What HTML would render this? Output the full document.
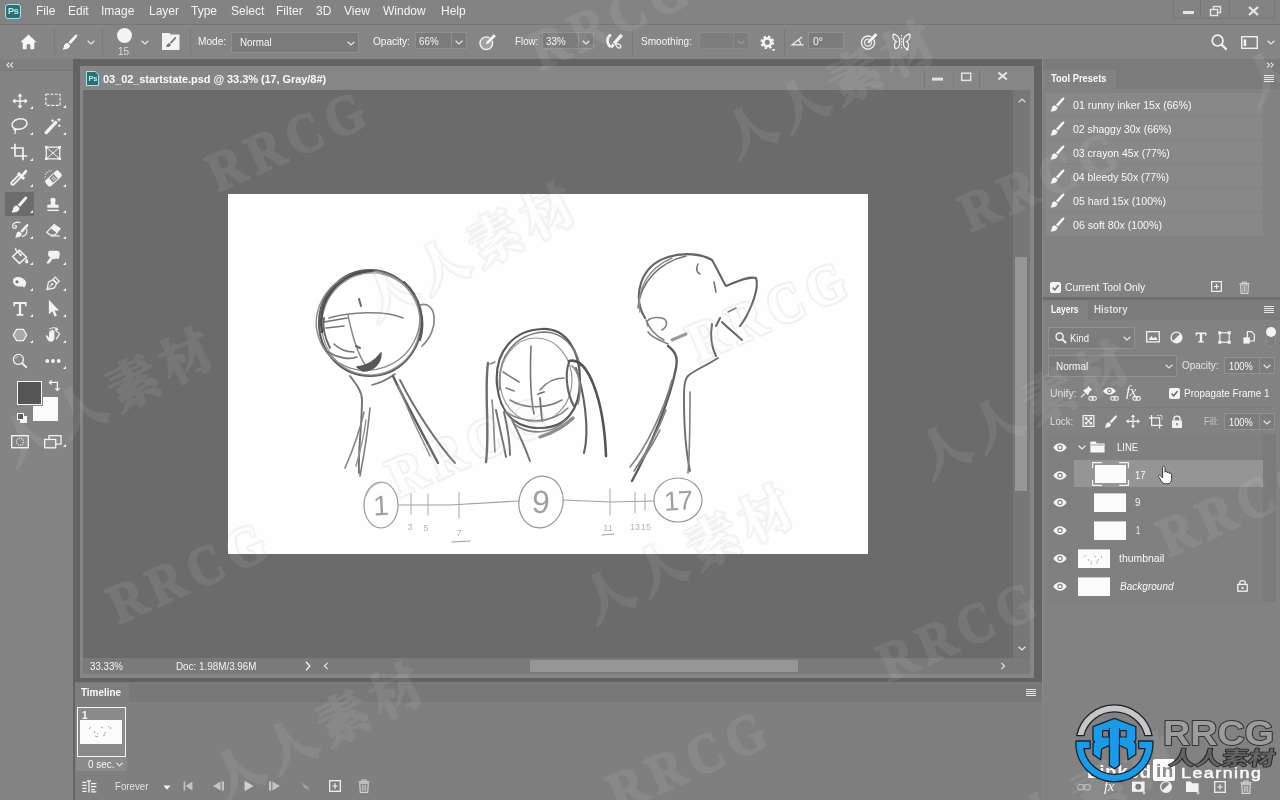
<!DOCTYPE html>
<html lang="en">
<head>
<meta charset="utf-8">
<title>Photoshop</title>
<style>
*{box-sizing:border-box;margin:0;padding:0}
html,body{width:1280px;height:800px;overflow:hidden;background:#6a6a6a}
body{position:relative;font-family:"Liberation Sans","Noto Sans CJK SC",sans-serif;font-size:11px;color:#f2f2f2;line-height:1}
.abs,.t,.b{position:absolute}
.t{white-space:nowrap;font-size:11.5px;line-height:14px;color:#f0f0f0}
.bold{font-weight:bold}
svg{position:absolute;overflow:visible}
/* ---------- frame ---------- */
#menubar{left:0;top:0;width:1280px;height:24px;background:#838383}
#menuline{left:0;top:24px;width:1280px;height:1px;background:#777}
#optbar{left:0;top:25px;width:1280px;height:34px;background:#858585}
#gap{left:0;top:59px;width:1280px;height:741px;background:#636363}
#toolbar{left:0;top:59px;width:73px;height:741px;background:#848484}
#toolhead{left:0;top:59px;width:73px;height:11px;background:#7f7f7f}
#docwin{left:80px;top:66px;width:954px;height:612px;background:#868686}
#doccanvas{left:83px;top:90px;width:930px;height:568px;background:#6b6b6b}
#vscroll{left:1013px;top:90px;width:17px;height:568px;background:#777}
#vthumb{left:1015px;top:257px;width:12px;height:234px;background:#969696}
#status{left:83px;top:658px;width:947px;height:16px;background:#7a7a7a}
#hthumb{left:530px;top:660px;width:268px;height:12px;background:#969696}
#paper{left:228px;top:194px;width:640px;height:360px;background:#fefefe}
#timeline{left:75px;top:682px;width:967px;height:118px;background:#7f7f7f}
#tlhead{left:75px;top:682px;width:967px;height:20px;background:#787878}
#tltab{left:75px;top:683px;width:54px;height:19px;background:#7f7f7f}
#rpanel{left:1042px;top:59px;width:238px;height:741px;background:#828282;border-left:1px solid #8a8a8a}

/* ---------- menu ---------- */
.m{position:absolute;top:4px;font-size:12px;line-height:15px;color:#f3f3f3;white-space:nowrap}
#pslogo{left:5px;top:4px;width:16px;height:15px;border:1px solid #a6e4e6;border-radius:3px;background:#2f6f73}
#pslogo span{position:absolute;left:2px;top:1px;font-size:9px;line-height:11px;font-weight:bold;color:#b7eef0;letter-spacing:-0.3px}
.wc{position:absolute;top:0;height:19px;border:1px solid #797979;border-top:0}
/* ---------- options bar ---------- */
.o{position:absolute;top:34px;font-size:11px;line-height:14px;color:#f6f6f6;white-space:nowrap}
.vsep{position:absolute;top:29px;width:1px;height:26px;background:#7a7a7a}
.box{position:absolute;top:32px;height:21px;border:1px solid #8f8f8f;background:#7b7b7b}
.chev{position:absolute;width:8px;height:5px}

/* ---------- document window ---------- */
.dt{position:absolute;top:72px;left:103px;font-size:11px;line-height:14px;font-weight:bold;color:#fafafa;white-space:nowrap;letter-spacing:-0.07px}
.st{position:absolute;top:659px;font-size:11px;line-height:14px;color:#f4f4f4;white-space:nowrap}

/* ---------- timeline ---------- */
.tab{position:absolute;font-size:10.5px;line-height:13px;font-weight:bold;color:#fafafa;white-space:nowrap}
/* ---------- right panels ---------- */
.r{position:absolute;font-size:11px;line-height:14px;color:#f8f8f8;white-space:nowrap}
.prow{position:absolute;left:1046px;width:217px;height:23px;background:#888888}
.rbox{position:absolute;border:1px solid #909090;background:#7c7c7c}
.thumb{position:absolute;background:#fbfbfb;border-top:1px solid #c8c8c8}
#wrap{position:absolute;left:0;top:0;width:1280px;height:800px;overflow:hidden;will-change:transform;transform:translateZ(0)}
</style>
</head>
<body>
<div id="wrap">
<div class="abs" id="menubar"></div>
<div class="abs" id="menuline"></div>
<div class="abs" id="optbar"></div>
<div class="abs" id="gap"></div>
<div class="abs" id="toolbar"></div>
<div class="abs" id="toolhead"></div>
<div class="abs" id="docwin"></div>
<div class="abs" id="doccanvas"></div>
<div class="abs" id="vscroll"></div>
<div class="abs" id="vthumb"></div>
<div class="abs" id="status"></div>
<div class="abs" id="hthumb"></div>
<div class="abs" id="paper"></div>
<div class="abs" id="timeline"></div>
<div class="abs" id="tlhead"></div>
<div class="abs" id="tltab"></div>
<div class="abs" id="rpanel"></div>

<!-- menu bar -->
<div class="abs" id="pslogo"><span>Ps</span></div>
<div class="m" style="left:36px">File</div>
<div class="m" style="left:68px">Edit</div>
<div class="m" style="left:101px">Image</div>
<div class="m" style="left:149px">Layer</div>
<div class="m" style="left:191px">Type</div>
<div class="m" style="left:231px">Select</div>
<div class="m" style="left:276px">Filter</div>
<div class="m" style="left:316px">3D</div>
<div class="m" style="left:344px">View</div>
<div class="m" style="left:383px">Window</div>
<div class="m" style="left:441px">Help</div>
<div class="wc" style="left:1173px;width:28px"></div>
<div class="wc" style="left:1200px;width:30px"></div>
<div class="wc" style="left:1229px;width:46px"></div>
<svg style="left:1182px;top:5px" width="90" height="14" viewBox="0 0 90 14">
 <rect x="1" y="6" width="11" height="3" fill="#e4e4e4"/>
 <rect x="31.5" y="1.5" width="7" height="6" fill="none" stroke="#e4e4e4" stroke-width="1.4"/>
 <rect x="28.5" y="4.5" width="7" height="6" fill="#838383" stroke="#e4e4e4" stroke-width="1.4"/>
 <path d="M67 2 L76 10 M76 2 L67 10" stroke="#e8e8e8" stroke-width="2.2" fill="none"/>
</svg>

<!-- options bar -->
<svg style="left:20px;top:34px;color:#f6f6f6" width="17" height="16" viewBox="0 0 17 16">
 <path d="M8.5 0.4 L16.6 8.2 H14.3 V15.2 H10.3 V10.2 H6.7 V15.2 H2.7 V8.2 H0.4Z" fill="#f6f6f6"/>
</svg>
<div class="vsep" style="left:54px"></div>
<svg style="left:62px;top:34px;color:#f2f2f2" width="16" height="16" viewBox="0 0 16 16"><path d="M14.6 0.6 C15.5 1 15.6 1.9 15 2.7 L8.6 10.2 L6.3 8.3 L13 1 C13.5 0.5 14 0.3 14.6 0.6Z" fill="currentColor"/>
   <path d="M5.6 9 L7.9 11 C8.3 13 6.5 15 3.6 15.2 C2.3 15.3 1 15.6 0.4 15.3 C1.6 14.3 1.6 13 2.1 11.4 C2.7 9.6 4.3 8.6 5.6 9Z" fill="currentColor"/></svg>
<svg style="left:87px;top:40px;color:#e6e6e6" width="8" height="5" viewBox="0 0 8 5"><path d="M0.6 0.7 L4 4 L7.4 0.7" fill="none" stroke="currentColor" stroke-width="1.2"/></svg>
<div class="vsep" style="left:102px"></div>
<div class="abs" style="left:117px;top:28px;width:15px;height:15px;border-radius:50%;background:#f4f4f4"></div>
<div class="o" style="left:118px;top:46px;font-size:10px;line-height:12px;color:#d8d8d8">15</div>
<svg style="left:141px;top:40px;color:#e6e6e6" width="8" height="5" viewBox="0 0 8 5"><path d="M0.6 0.7 L4 4 L7.4 0.7" fill="none" stroke="currentColor" stroke-width="1.2"/></svg>
<svg style="left:162px;top:33px" width="18" height="17" viewBox="0 0 18 17">
 <path d="M0 0 H7.5 L8.5 1.6 H17.5 V17 H0Z" fill="#f3f3f3"/>
 <path d="M13.6 4 C14.3 4.4 14.3 5 13.9 5.5 L9.3 10.8 L7.9 9.6 L12.6 4.4 C12.9 4 13.2 3.8 13.6 4Z M7.3 10.2 L8.8 11.5 C8.9 13 7.6 14 5.6 14.1 C4.9 14.1 4.2 14.3 3.8 14.1 C4.7 13.4 4.6 12.7 5 11.7 C5.4 10.6 6.4 9.9 7.3 10.2Z" fill="#727272"/>
</svg>
<div class="vsep" style="left:190px"></div>
<div class="o" style="left:197.5px;transform:scaleX(0.919);transform-origin:0 50%;/*t*/">Mode:</div>
<div class="box" style="left:231px;width:128px"></div>
<div class="o" style="left:239.6px;top:35px;transform:scaleX(0.894);transform-origin:0 50%;/*t*/">Normal</div>
<svg style="left:347px;top:41px;color:#e6e6e6" width="8" height="5" viewBox="0 0 8 5"><path d="M0.6 0.7 L4 4 L7.4 0.7" fill="none" stroke="currentColor" stroke-width="1.2"/></svg>
<div class="o" style="left:372.5px;transform:scaleX(0.914);transform-origin:0 50%;/*t*/">Opacity:</div>
<div class="box" style="left:415px;width:52px;height:17px"></div>
<div class="abs" style="left:451px;top:33px;width:1px;height:15px;background:#8f8f8f"></div>
<div class="o" style="left:419.4px;transform:scaleX(0.890);transform-origin:0 50%;/*t*/">66%</div>
<svg style="left:455px;top:40px;color:#e6e6e6" width="8" height="5" viewBox="0 0 8 5"><path d="M0.6 0.7 L4 4 L7.4 0.7" fill="none" stroke="currentColor" stroke-width="1.2"/></svg>
<svg style="left:479px;top:33px" width="18" height="18" viewBox="0 0 18 18">
 <circle cx="7.3" cy="10.2" r="6.3" fill="#a2a2a2" stroke="#efefef" stroke-width="1.4"/>
 <path d="M14.8 0.8 L17.2 3.2 L9.6 11 L6 12.2 L7.2 8.6Z" fill="#f6f6f6" stroke="#858585" stroke-width="0.7"/>
</svg>
<div class="o" style="left:514.7px;transform:scaleX(0.887);transform-origin:0 50%;/*t*/">Flow:</div>
<div class="box" style="left:542px;width:52px;height:17px"></div>
<div class="abs" style="left:578px;top:33px;width:1px;height:15px;background:#8f8f8f"></div>
<div class="o" style="left:546.4px;transform:scaleX(0.890);transform-origin:0 50%;/*t*/">33%</div>
<svg style="left:582px;top:40px;color:#e6e6e6" width="8" height="5" viewBox="0 0 8 5"><path d="M0.6 0.7 L4 4 L7.4 0.7" fill="none" stroke="currentColor" stroke-width="1.2"/></svg>
<svg style="left:605px;top:33px" width="19" height="18" viewBox="0 0 19 18">
 <path d="M6 1.6 C1.6 4 1.2 10 5.4 14" fill="none" stroke="#f0f0f0" stroke-width="2.6"/>
 <path d="M15.6 0.8 L18 3 L10.4 11.6 L7.8 9.4Z M7.2 10.2 L9.6 12.4 L7.4 15 L5.4 14.4Z" fill="#f0f0f0"/>
 <path d="M10.5 11.5 C11.5 10.2 14.5 10.6 15.6 12.4 C16.4 13.8 15.4 15.4 13.6 15 C12 14.7 11.4 13.4 10.5 11.5Z" fill="none" stroke="#f0f0f0" stroke-width="1.3"/>
</svg>
<div class="vsep" style="left:632px"></div>
<div class="o" style="left:641px;transform:scaleX(0.916);transform-origin:0 50%;/*t*/">Smoothing:</div>
<div class="box" style="left:699px;width:50px;height:17px;border-color:#8a8a8a;background:#7d7d7d"></div>
<div class="abs" style="left:733px;top:33px;width:1px;height:15px;background:#8a8a8a"></div>
<svg style="left:737px;top:40px;color:#9c9c9c" width="8" height="5" viewBox="0 0 8 5"><path d="M0.6 0.7 L4 4 L7.4 0.7" fill="none" stroke="currentColor" stroke-width="1.2"/></svg>
<svg style="left:759.5px;top:34.5px" width="16.4" height="20" viewBox="0 0 18 22">
 <circle cx="8" cy="8" r="4.3" fill="none" stroke="#f4f4f4" stroke-width="3"/>
 <circle cx="8" cy="8" r="6.2" fill="none" stroke="#f4f4f4" stroke-width="2.6" stroke-dasharray="2.6 2.27"/>
 <path d="M12.4 15.6 H17.2 L14.8 18Z" fill="#f4f4f4"/>
</svg>
<div class="vsep" style="left:784px"></div>
<svg style="left:791px;top:35.5px" width="13" height="10" viewBox="0 0 13 10">
 <path d="M11 1 L1.2 8.8 H12.6" fill="none" stroke="#efefef" stroke-width="1.3"/>
 <path d="M7.4 4 C9 5.4 9.6 7 9.6 8.6" fill="none" stroke="#efefef" stroke-width="1.1"/>
</svg>
<div class="box" style="left:808px;width:36px;top:32px;height:17px"></div>
<div class="o" style="left:813px;font-size:10.5px">0°</div>
<svg style="left:860px;top:32px" width="19" height="19" viewBox="0 0 19 19">
 <circle cx="8" cy="10.6" r="6.6" fill="none" stroke="#efefef" stroke-width="1.4"/>
 <circle cx="8" cy="10.6" r="3.5" fill="none" stroke="#efefef" stroke-width="1.3"/>
 <path d="M15.4 0.8 L17.8 3.2 L10.4 10.8 L6.8 12 L8 8.4Z" fill="#f6f6f6" stroke="#858585" stroke-width="0.7"/>
</svg>
<svg style="left:892px;top:33px" width="19" height="18" viewBox="0 0 19 18">
 <path d="M7.6 6.2 C5.6 2 2.4 0.8 1 1.4 C0.6 4.6 2.2 7.4 4.4 8.6 C2.4 9.4 1.6 12.6 3.6 15.6 C6 15.8 7.4 13 7.6 10.6Z" fill="none" stroke="#efefef" stroke-width="1.3"/>
 <path d="M11.4 6.2 C13.4 2 16.6 0.8 18 1.4 C18.4 4.6 16.8 7.4 14.6 8.6 C16.6 9.4 17.4 12.6 15.4 15.6 C13 15.8 11.6 13 11.4 10.6Z" fill="none" stroke="#efefef" stroke-width="1.3"/>
 <path d="M9.5 2 V17" stroke="#efefef" stroke-width="1" stroke-dasharray="1.5 1.5"/>
 <path d="M13.4 16 H17.4 L15.4 18Z" fill="#efefef"/>
</svg>
<svg style="left:1211px;top:34px" width="17" height="17" viewBox="0 0 17 17">
 <circle cx="6.6" cy="6.6" r="5.4" fill="none" stroke="#f2f2f2" stroke-width="1.7"/>
 <path d="M10.6 10.6 L15.6 15.6" stroke="#f2f2f2" stroke-width="2.2"/>
</svg>
<svg style="left:1241px;top:36px" width="17" height="13" viewBox="0 0 17 13">
 <rect x="0.7" y="0.7" width="15.6" height="11.6" fill="none" stroke="#f0f0f0" stroke-width="1.4"/>
 <rect x="2.6" y="3.4" width="2.6" height="6.6" fill="#f0f0f0"/>
</svg>
<svg style="left:1266.5px;top:39.5px;color:#e6e6e6" width="8" height="5" viewBox="0 0 8 5"><path d="M0.6 0.7 L4 4 L7.4 0.7" fill="none" stroke="currentColor" stroke-width="1.2"/></svg>

<!-- toolbar -->
<svg style="left:6px;top:61.5px" width="8" height="6" viewBox="0 0 10 7"><path d="M4 0.6 L1.2 3.5 L4 6.4 M8.4 0.6 L5.6 3.5 L8.4 6.4" fill="none" stroke="#f0f0f0" stroke-width="1.3"/></svg>
<div class="abs" style="left:0;top:70px;width:73px;height:1px;background:#7a7a7a"></div>
<div class="abs" style="left:5px;top:192px;width:29px;height:24px;background:#6c6c6c;border-radius:1px"></div>
<svg style="left:11.5px;top:92.5px" width="16" height="16" viewBox="0 0 18 18" fill="none" stroke="#f2f2f2" stroke-width="1.3"><path d="M9 1.6 V16.4 M1.6 9 H16.4" stroke-width="1.5"/><path d="M9 0.4 L11.8 3.8 H6.2Z M9 17.6 L11.8 14.2 H6.2Z M0.4 9 L3.8 6.2 V11.8Z M17.6 9 L14.2 6.2 V11.8Z" fill="#f2f2f2" stroke="none"/></svg>
<svg style="left:29.5px;top:106px" width="3" height="3" viewBox="0 0 4 4"><path d="M4 0 V4 H0Z" fill="#f2f2f2"/></svg>
<svg style="left:45px;top:91.5px" width="16" height="16" viewBox="0 0 18 18" fill="none" stroke="#f2f2f2" stroke-width="1.3"><rect x="1" y="2.5" width="16" height="12.5" stroke-dasharray="3.4 1.6" stroke-width="1.3"/></svg>
<svg style="left:63px;top:105px" width="3" height="3" viewBox="0 0 4 4"><path d="M4 0 V4 H0Z" fill="#f2f2f2"/></svg>
<svg style="left:10px;top:117px" width="18" height="18" viewBox="0 0 18 18" fill="none" stroke="#f2f2f2" stroke-width="1.3"><ellipse cx="9.5" cy="7" rx="7.6" ry="5.2" transform="rotate(-12 9.5 7)" stroke-width="1.5"/><path d="M4.2 11.2 C3.2 12.4 4.4 13.8 5.6 13 C6.4 12.4 5.8 11.2 4.8 11.4 M5.4 13.2 C5.8 14.6 5.4 16 4.6 17" stroke-width="1.3"/></svg>
<svg style="left:29.5px;top:132px" width="3" height="3" viewBox="0 0 4 4"><path d="M4 0 V4 H0Z" fill="#f2f2f2"/></svg>
<svg style="left:43.5px;top:117px" width="18" height="18" viewBox="0 0 18 18" fill="none" stroke="#f2f2f2" stroke-width="1.3"><path d="M2.2 15.6 L11.6 5.6" stroke-width="3.4" stroke-linecap="round"/><path d="M8.6 2.2 V5 M7.2 3.6 H10 M15 1 V4.6 M13.2 2.8 H16.8 M15.4 7.4 V10 M14.1 8.7 H16.7" stroke-width="1.1"/></svg>
<svg style="left:63px;top:132px" width="3" height="3" viewBox="0 0 4 4"><path d="M4 0 V4 H0Z" fill="#f2f2f2"/></svg>
<svg style="left:10px;top:143px" width="18" height="18" viewBox="0 0 18 18" fill="none" stroke="#f2f2f2" stroke-width="1.3"><path d="M5 0.8 V13 H17.2 M0.8 5 H13 V17.2" stroke-width="1.7"/></svg>
<svg style="left:29.5px;top:158px" width="3" height="3" viewBox="0 0 4 4"><path d="M4 0 V4 H0Z" fill="#f2f2f2"/></svg>
<svg style="left:45px;top:144.5px" width="16" height="16" viewBox="0 0 18 18" fill="none" stroke="#f2f2f2" stroke-width="1.3"><rect x="1.4" y="2.4" width="15.2" height="13.2" stroke-width="1.4"/><path d="M1.4 2.4 L16.6 15.6 M16.6 2.4 L1.4 15.6" stroke-width="1.1"/><path d="M0 1 H2.8 V3.8 H0Z M15.2 1 H18 V3.8 H15.2Z M0 14.2 H2.8 V17 H0Z M15.2 14.2 H18 V17 H15.2Z" fill="#f2f2f2" stroke="none"/></svg>
<svg style="left:10px;top:169px" width="18" height="18" viewBox="0 0 18 18" fill="none" stroke="#f2f2f2" stroke-width="1.3"><path d="M11.4 7.6 L4 15.2 C3 16.2 1.2 15.8 1.2 14.2 C1.2 13.6 1.6 13.2 2.2 12.6 L9.6 5.2" stroke-width="1.8"/><path d="M9 2.8 L15.2 9 L13 11 L7 5Z M11.6 5.6 L14.8 1.2 C16 0 18.2 1.8 17 3.4 L13.2 7.2Z" fill="#f2f2f2" stroke="none"/></svg>
<svg style="left:29.5px;top:184px" width="3" height="3" viewBox="0 0 4 4"><path d="M4 0 V4 H0Z" fill="#f2f2f2"/></svg>
<svg style="left:43.5px;top:169px" width="18" height="18" viewBox="0 0 18 18" fill="none" stroke="#f2f2f2" stroke-width="1.3"><g transform="rotate(-42 9.5 9.5)"><rect x="0.6" y="5.4" width="17.8" height="8" rx="2.2" fill="#f2f2f2" stroke="none"/><rect x="6.4" y="6.4" width="6.2" height="6" fill="#858585" stroke="none"/><path d="M8 8 h1.2 v1.2 h-1.2z M10 8 h1.2 v1.2 h-1.2z M8 10 h1.2 v1.2 h-1.2z M10 10 h1.2 v1.2 h-1.2z" fill="#f2f2f2" stroke="none"/></g><path d="M1.4 8.4 C0.8 4.6 3.6 1.4 7.6 1.8" stroke-width="1.1" stroke-dasharray="1.2 1.2"/></svg>
<svg style="left:63px;top:184px" width="3" height="3" viewBox="0 0 4 4"><path d="M4 0 V4 H0Z" fill="#f2f2f2"/></svg>
<svg style="left:11px;top:196px;color:#f4f4f4" width="17" height="17" viewBox="0 0 16 16"><path d="M14.6 0.6 C15.5 1 15.6 1.9 15 2.7 L8.6 10.2 L6.3 8.3 L13 1 C13.5 0.5 14 0.3 14.6 0.6Z" fill="currentColor"/>
   <path d="M5.6 9 L7.9 11 C8.3 13 6.5 15 3.6 15.2 C2.3 15.3 1 15.6 0.4 15.3 C1.6 14.3 1.6 13 2.1 11.4 C2.7 9.6 4.3 8.6 5.6 9Z" fill="currentColor"/></svg>
<svg style="left:29.5px;top:210px" width="3" height="3" viewBox="0 0 4 4"><path d="M4 0 V4 H0Z" fill="#f2f2f2"/></svg>
<svg style="left:45px;top:196.5px" width="16" height="16" viewBox="0 0 18 18" fill="none" stroke="#f2f2f2" stroke-width="1.3"><path d="M9 0.8 C11.4 0.8 12.6 2.8 11.8 4.8 C11.2 6.2 11.2 7.4 12 8.6 H15.4 V12.2 H2.6 V8.6 H6 C6.8 7.4 6.8 6.2 6.2 4.8 C5.4 2.8 6.6 0.8 9 0.8Z" fill="#f2f2f2" stroke="none"/><path d="M2.6 15 H15.4" stroke-width="1.7"/></svg>
<svg style="left:63px;top:210px" width="3" height="3" viewBox="0 0 4 4"><path d="M4 0 V4 H0Z" fill="#f2f2f2"/></svg>
<svg style="left:10.5px;top:221px" width="18" height="18" viewBox="0 0 18 18" fill="none" stroke="#f2f2f2" stroke-width="1.3"><g transform="translate(3.6 2.6) scale(0.9)" fill="#f2f2f2" stroke="none"><path d="M14.6 0.6 C15.5 1 15.6 1.9 15 2.7 L8.6 10.2 L6.3 8.3 L13 1 C13.5 0.5 14 0.3 14.6 0.6Z"/><path d="M5.6 9 L7.9 11 C8.3 13 6.5 15 3.6 15.2 C2.3 15.3 1 15.6 0.4 15.3 C1.6 14.3 1.6 13 2.1 11.4 C2.7 9.6 4.3 8.6 5.6 9Z"/></g><path d="M9.4 1.6 C5.6 0 1.4 2.2 1.6 5.4 C1.8 8 5.6 7.8 5.4 5.4 C5.2 4 3.8 4.2 3.8 5.2 M15.6 7.6 C17 11.4 15 14.6 11 15.6" stroke-width="1.2"/></svg>
<svg style="left:29.5px;top:236px" width="3" height="3" viewBox="0 0 4 4"><path d="M4 0 V4 H0Z" fill="#f2f2f2"/></svg>
<svg style="left:45px;top:222.5px" width="16" height="16" viewBox="0 0 18 18" fill="none" stroke="#f2f2f2" stroke-width="1.3"><path d="M10.2 1.6 L17 6.4 L11.2 13.6 H6.2 L2 10.6Z" stroke-width="1.3"/><path d="M10.2 1.6 L17 6.4 L13.4 11 L6.6 6.2Z" fill="#f2f2f2" stroke="none"/><path d="M6 14.6 H16.6" stroke-width="1.3"/></svg>
<svg style="left:63px;top:236px" width="3" height="3" viewBox="0 0 4 4"><path d="M4 0 V4 H0Z" fill="#f2f2f2"/></svg>
<svg style="left:10.5px;top:247px" width="18" height="18" viewBox="0 0 18 18" fill="none" stroke="#f2f2f2" stroke-width="1.3"><path d="M8.4 3.2 L15.4 10.2 L8.4 16.4 L1.6 9.6Z" stroke-width="1.5"/><path d="M5 1 C4 2 5 3.4 6.2 4.4 L9.6 7.8" stroke-width="1.4"/><circle cx="9.6" cy="8" r="1.2" fill="#f2f2f2" stroke="none"/><path d="M15.6 11.2 C16.8 13 17.8 14.6 17 15.8 C16.2 16.8 14.6 16.6 14.2 15.4 C13.8 14.2 14.8 12.8 15.6 11.2Z" fill="#f2f2f2" stroke="none"/></svg>
<svg style="left:29.5px;top:262px" width="3" height="3" viewBox="0 0 4 4"><path d="M4 0 V4 H0Z" fill="#f2f2f2"/></svg>
<svg style="left:45px;top:248.5px" width="16" height="16" viewBox="0 0 18 18" fill="none" stroke="#f2f2f2" stroke-width="1.3"><path d="M5.2 2 H13.6 C16 2 16.8 3.6 16.6 5.8 L16 9.6 C15.6 11.6 13 11.6 12.6 10 C11.4 11.8 9.4 11.8 9 10.6 L5 15.8 C4 17 2 16.6 1.8 15.6 L6 9.2 C4 8.6 3.2 6.8 3.6 4.8 C3.8 3.2 4.2 2.4 5.2 2Z" fill="#f2f2f2" stroke="none"/></svg>
<svg style="left:63px;top:262px" width="3" height="3" viewBox="0 0 4 4"><path d="M4 0 V4 H0Z" fill="#f2f2f2"/></svg>
<svg style="left:11.5px;top:274.5px" width="16" height="16" viewBox="0 0 18 18" fill="none" stroke="#f2f2f2" stroke-width="1.3"><path d="M2 4 C4.4 1.6 9 1.8 12.4 4 C15.6 6 16.8 9.4 15.4 11.4 L13.8 14.2 L11.4 12.6 C8.6 13.6 4.6 12.8 2.6 10.6 C0.8 8.6 0.6 5.6 2 4Z" fill="#f2f2f2" stroke="none"/><circle cx="5.6" cy="7.6" r="1.7" fill="#6e6e6e" stroke="none"/></svg>
<svg style="left:29.5px;top:288px" width="3" height="3" viewBox="0 0 4 4"><path d="M4 0 V4 H0Z" fill="#f2f2f2"/></svg>
<svg style="left:45px;top:274.5px" width="16" height="16" viewBox="0 0 18 18" fill="none" stroke="#f2f2f2" stroke-width="1.3"><path d="M11.4 2.4 L16 7 L13.6 9.4 L9 4.8Z" stroke-width="1.3"/><path d="M8.8 5.4 L13 9.6 L10.6 14.6 L2.4 16.4 L3.8 8Z" stroke-width="1.4"/><path d="M2.6 16.2 L7.6 10.6" stroke-width="1.1"/><circle cx="8" cy="10.4" r="1.3" fill="#f2f2f2" stroke="none"/></svg>
<svg style="left:63px;top:288px" width="3" height="3" viewBox="0 0 4 4"><path d="M4 0 V4 H0Z" fill="#f2f2f2"/></svg>
<svg style="left:11.5px;top:300.5px" width="16" height="16" viewBox="0 0 18 18" fill="none" stroke="#f2f2f2" stroke-width="1.3"><path d="M1.6 1.2 H16.4 V5.8 H14.6 V3.4 H10.3 V14.6 H12.8 V16.6 H5.2 V14.6 H7.7 V3.4 H3.4 V5.8 H1.6Z" fill="#f2f2f2" stroke="none"/></svg>
<svg style="left:29.5px;top:314px" width="3" height="3" viewBox="0 0 4 4"><path d="M4 0 V4 H0Z" fill="#f2f2f2"/></svg>
<svg style="left:45px;top:300.5px" width="16" height="16" viewBox="0 0 18 18" fill="none" stroke="#f2f2f2" stroke-width="1.3"><path d="M4.4 -1.4 V14.8 L8.2 11.4 L10.8 17.6 L13.4 16.4 L10.8 10.6 H15.8Z" fill="#f2f2f2" stroke="none"/></svg>
<svg style="left:63px;top:314px" width="3" height="3" viewBox="0 0 4 4"><path d="M4 0 V4 H0Z" fill="#f2f2f2"/></svg>
<svg style="left:11.5px;top:326.5px" width="16" height="16" viewBox="0 0 18 18" fill="none" stroke="#f2f2f2" stroke-width="1.3"><path d="M5.2 2.6 H12.8 L16.6 9 L12.8 15.4 H5.2 L1.4 9Z" fill="#a8a8a8" stroke-width="1.4"/></svg>
<svg style="left:29.5px;top:340px" width="3" height="3" viewBox="0 0 4 4"><path d="M4 0 V4 H0Z" fill="#f2f2f2"/></svg>
<svg style="left:45px;top:326.5px" width="16" height="16" viewBox="0 0 18 18" fill="none" stroke="#f2f2f2" stroke-width="1.3"><path d="M4.6 9.6 V5.6 C4.6 4.6 6 4.6 6 5.6 V4.2 C6 3.2 7.6 3.2 7.6 4.2 V3.8 C7.6 2.8 9.2 2.8 9.2 3.8 V4.6 C9.2 3.8 10.6 3.8 10.6 4.8 V11.6 C10.6 14.4 9.4 16.6 6.8 16.6 C4.6 16.6 3.4 15.2 2.4 13.2 L1 10.4 C0.6 9.4 1.8 8.8 2.6 9.8 L4.6 12Z" fill="#f2f2f2" stroke="none"/><path d="M11 2.6 L16.4 7.6 L12.6 13.6" stroke-width="1.3"/><path d="M5 2.4 C7.4 0.2 11.6 0.4 13.6 2.2" stroke-width="1.2"/><path d="M12.4 0.4 L15.6 3 L11.8 3.8Z" fill="#f2f2f2" stroke="none"/></svg>
<svg style="left:63px;top:340px" width="3" height="3" viewBox="0 0 4 4"><path d="M4 0 V4 H0Z" fill="#f2f2f2"/></svg>
<svg style="left:11.5px;top:352.5px" width="16" height="16" viewBox="0 0 18 18" fill="none" stroke="#f2f2f2" stroke-width="1.3"><circle cx="7.2" cy="7.2" r="5.6" stroke-width="1.5"/><path d="M11.4 11.4 L16.6 16.6" stroke-width="2.2"/><path d="M4.2 6.4 C4.6 5 5.8 4.2 7 4.2" stroke-width="0.9"/></svg>
<svg style="left:45px;top:352.5px" width="16" height="16" viewBox="0 0 18 18" fill="none" stroke="#f2f2f2" stroke-width="1.3"><circle cx="2.6" cy="9" r="2.2" fill="#f2f2f2" stroke="none"/><circle cx="9" cy="9" r="2.2" fill="#f2f2f2" stroke="none"/><circle cx="15.4" cy="9" r="2.2" fill="#f2f2f2" stroke="none"/></svg>
<svg style="left:63px;top:366px" width="3" height="3" viewBox="0 0 4 4"><path d="M4 0 V4 H0Z" fill="#f2f2f2"/></svg>
<div class="abs" style="left:33px;top:397px;width:25px;height:24px;background:#fbfbfb"></div>
<div class="abs" style="left:17px;top:381px;width:25px;height:24px;background:#555;border:1px solid #f4f4f4;box-shadow:0 0 0 1px #848484"></div>
<svg style="left:48px;top:379px" width="13" height="13" viewBox="0 0 13 13"><path d="M3 3.4 H9.4 V9.6" fill="none" stroke="#f2f2f2" stroke-width="1.3"/><path d="M0.4 3.4 L3.6 0.6 V6.2Z M9.4 12.6 L6.6 9.2 H12.2Z" fill="#f2f2f2"/></svg>
<div class="abs" style="left:20px;top:416px;width:7px;height:7px;background:#f6f6f6"></div>
<div class="abs" style="left:17px;top:413px;width:7px;height:7px;background:#555;border:1px solid #f4f4f4"></div>
<svg style="left:11px;top:435px" width="18" height="14" viewBox="0 0 18 14"><rect x="0.7" y="0.7" width="16.6" height="12" fill="none" stroke="#f2f2f2" stroke-width="1.4"/><circle cx="9" cy="6.7" r="3.6" fill="none" stroke="#f2f2f2" stroke-width="1.1" stroke-dasharray="1.1 1.1"/></svg>
<svg style="left:44px;top:435px" width="18" height="14" viewBox="0 0 18 14"><rect x="5" y="0.7" width="12" height="8.4" fill="none" stroke="#f2f2f2" stroke-width="1.3"/><rect x="0.7" y="4.4" width="11" height="8.4" fill="#848484" stroke="#f2f2f2" stroke-width="1.3"/></svg>
<svg style="left:63px;top:444px" width="3" height="3" viewBox="0 0 4 4"><path d="M4 0 V4 H0Z" fill="#f2f2f2"/></svg>

<!-- document window -->
<svg style="left:86px;top:71px" width="13" height="15" viewBox="0 0 13 15"><path d="M0.5 0.5 H9.2 L12.5 3.8 V14.5 H0.5Z" fill="#2f6f73" stroke="#a6e4e6" stroke-width="1"/></svg>
<div class="abs" style="left:88.5px;top:74px;font-size:7.5px;line-height:9px;font-weight:bold;color:#b7eef0;letter-spacing:-0.3px">Ps</div>
<div class="dt">03_02_startstate.psd @ 33.3% (17, Gray/8#)</div>
<div class="abs" style="left:924px;top:69px;width:1px;height:19px;background:#7c7c7c"></div>
<div class="abs" style="left:953px;top:69px;width:1px;height:19px;background:#7c7c7c"></div>
<div class="abs" style="left:979px;top:69px;width:1px;height:19px;background:#7c7c7c"></div>
<svg style="left:931px;top:70px" width="80" height="16" viewBox="0 0 80 16">
 <rect x="1" y="7.6" width="11" height="3" fill="#e2e2e2"/>
 <rect x="30.7" y="3.2" width="9" height="7.2" fill="none" stroke="#e2e2e2" stroke-width="1.5"/>
 <path d="M67.4 2.6 L75.8 9.6 M75.8 2.6 L67.4 9.6" stroke="#e6e6e6" stroke-width="2" fill="none"/>
</svg>
<svg style="left:1018px;top:98px;color:#dcdcdc" width="8" height="5" viewBox="0 0 8 5"><g transform="rotate(180 4.0 2.5)"><path d="M0.6 0.7 L4 4 L7.4 0.7" fill="none" stroke="currentColor" stroke-width="1.2"/></g></svg>
<svg style="left:1018px;top:646px;color:#e8e8e8" width="8" height="5" viewBox="0 0 8 5"><path d="M0.6 0.7 L4 4 L7.4 0.7" fill="none" stroke="currentColor" stroke-width="1.2"/></svg>
<div class="st" style="left:90px;transform:scaleX(0.884);transform-origin:0 50%;/*t*/">33.33%</div>
<div class="st" style="left:175.5px;transform:scaleX(0.896);transform-origin:0 50%;/*t*/">Doc: 1.98M/3.96M</div>
<svg style="left:305px;top:661px;color:#efefef" width="6" height="10" viewBox="0 0 6 10"><path d="M1 0.8 L4.8 5 L1 9.2" fill="none" stroke="currentColor" stroke-width="1.4"/></svg>
<svg style="left:323px;top:662px;color:#e4e4e4" width="6" height="8" viewBox="0 0 6 8"><path d="M4.6 0.8 L1.4 4 L4.6 7.2" fill="none" stroke="currentColor" stroke-width="1.2"/></svg>
<svg style="left:1000px;top:662px;color:#e4e4e4" width="6" height="8" viewBox="0 0 6 8"><path d="M1.4 0.8 L4.6 4 L1.4 7.2" fill="none" stroke="currentColor" stroke-width="1.2"/></svg>

<!-- timeline -->
<div class="tab" style="left:81px;top:686px;transform:scaleX(0.943);transform-origin:0 50%;/*t*/">Timeline</div>
<svg style="left:1026px;top:689px;color:#e6e6e6" width="10" height="8" viewBox="0 0 10 8"><path d="M0 0 H10 V1 H0Z M0 2 H10 V3 H0Z M0 4 H10 V5 H0Z M0 6 H10 V7 H0Z" fill="currentColor" shape-rendering="crispEdges"/></svg>
<div class="abs" style="left:77px;top:707px;width:49px;height:50px;border:1px solid #f6f6f6;background:#8a8a8a"></div>
<div class="abs" style="left:80px;top:720px;width:42px;height:24px;background:#fcfcfc"></div>
<svg style="left:80px;top:720px" width="42" height="24" viewBox="0 0 42 24"><path d="M9 9 l2 -2 m3 4 l1 2 m6 -6 l2 1 m-8 8 l3 1 m6 -3 l2 -2 m4 -5 l1 2 m-14 4 l1 1 m5 2 l2 -1 m3 -9 l1 1" stroke="#8c8c8c" stroke-width="0.8" fill="none"/></svg>
<div class="tab" style="left:82px;top:709px;font-size:10px">1</div>
<div class="abs" style="left:76px;top:757px;width:51px;height:14px;background:#8a8a8a"></div>
<div class="r" style="left:88px;top:757px;font-size:11px;transform:scaleX(0.903);transform-origin:0 50%;/*t*/">0 sec.</div>
<svg style="left:116px;top:762px;color:#f0f0f0" width="7" height="5" viewBox="0 0 8 5"><path d="M0.6 0.7 L4 4 L7.4 0.7" fill="none" stroke="currentColor" stroke-width="1.2"/></svg>
<svg style="left:82px;top:780px" width="15" height="13" viewBox="0 0 15 13"><path d="M0.4 2.4 H4.6 M0.4 5.4 H4.6 M0.4 8.4 H4.6 M0.4 11.4 H4.6 M9 3.6 H14.4 M9 6.6 H14.4 M9 9.6 H13 M9 11.8 H14.4" stroke="#f2f2f2" stroke-width="1.3" fill="none"/><path d="M7 1 V12.6 M5 0.8 H9" stroke="#f2f2f2" stroke-width="1.3" fill="none"/></svg>
<div class="r" style="left:114.5px;top:779px;color:#e0e0e0;transform:scaleX(0.884);transform-origin:0 50%;/*t*/">Forever</div>
<svg style="left:163px;top:785px" width="8" height="5" viewBox="0 0 8 5"><path d="M0.4 0.4 H7.6 L4 4.8Z" fill="#f4f4f4"/></svg>
<svg style="left:183px;top:780px" width="130" height="12" viewBox="0 0 130 12" fill="#c4c4c4">
 <path d="M0.6 1.4 H2.2 V10.6 H0.6Z M9.4 1.4 V10.6 L2.6 6Z"/>
 <path d="M37.6 1.4 V10.6 L30 6Z M38.8 1.4 H41 V10.6 H38.8Z"/>
 <path d="M61.6 0.8 L70.4 6 L61.6 11.2Z" fill="#d0d0d0"/>
 <path d="M86 1.4 H88.2 V10.6 H86Z M89.4 1.4 L97 6 L89.4 10.6Z"/>
 <path d="M118.4 2.4 L126 7.6 L124.6 9.6 L122 8.6Z M126 6.6 A1.8 1.8 0 1 0 126.1 10.2Z" fill="#a4a4a4"/>
</svg>
<svg style="left:329px;top:780px;color:#f2f2f2" width="12" height="12" viewBox="0 0 12 12"><rect x="0.7" y="0.7" width="10.6" height="10.6" fill="none" stroke="currentColor" stroke-width="1.3"/>
   <path d="M6 3.3 V8.7 M3.3 6 H8.7" stroke="currentColor" stroke-width="1.2" fill="none"/></svg>
<svg style="left:358px;top:779px;color:#d0d0d0" width="12" height="14" viewBox="0 0 12 14"><path d="M0.5 2.8 H11.5 M4 2.6 V1 H8 V2.6" fill="none" stroke="currentColor" stroke-width="1.2"/>
   <path d="M1.7 4.2 H10.3 L9.7 13.4 H2.3Z" fill="none" stroke="currentColor" stroke-width="1.2"/>
   <path d="M4.3 5.6 V11.8 M6 5.6 V11.8 M7.7 5.6 V11.8" fill="none" stroke="currentColor" stroke-width="0.9"/></svg>

<!-- tool presets panel -->
<div class="abs" style="left:1043px;top:59px;width:237px;height:9px;background:#7b7b7b"></div>
<div class="abs" style="left:1043px;top:68px;width:237px;height:21px;background:#7b7b7b"></div>
<div class="abs" style="left:1043px;top:70px;width:73px;height:19px;background:#828282"></div>
<svg style="left:1265.5px;top:61.5px" width="8" height="6" viewBox="0 0 10 7"><path d="M1.6 0.6 L4.4 3.5 L1.6 6.4 M6 0.6 L8.8 3.5 L6 6.4" fill="none" stroke="#f0f0f0" stroke-width="1.3"/></svg>
<div class="tab" style="left:1051px;top:72px;transform:scaleX(0.892);transform-origin:0 50%;/*t*/">Tool Presets</div>
<svg style="left:1264px;top:75px;color:#e6e6e6" width="10" height="8" viewBox="0 0 10 8"><path d="M0 0 H10 V1 H0Z M0 2 H10 V3 H0Z M0 4 H10 V5 H0Z M0 6 H10 V7 H0Z" fill="currentColor" shape-rendering="crispEdges"/></svg>
<div class="prow" style="top:93px"></div>
<svg style="left:1050px;top:97px;color:#f4f4f4" width="15" height="15" viewBox="0 0 16 16"><path d="M14.6 0.6 C15.5 1 15.6 1.9 15 2.7 L8.6 10.2 L6.3 8.3 L13 1 C13.5 0.5 14 0.3 14.6 0.6Z" fill="currentColor"/>
   <path d="M5.6 9 L7.9 11 C8.3 13 6.5 15 3.6 15.2 C2.3 15.3 1 15.6 0.4 15.3 C1.6 14.3 1.6 13 2.1 11.4 C2.7 9.6 4.3 8.6 5.6 9Z" fill="currentColor"/></svg>
<div class="r" style="left:1073px;top:98px;transform:scaleX(0.964);transform-origin:0 50%;/*t*/">01 runny inker 15x (66%)</div>
<div class="prow" style="top:117px"></div>
<svg style="left:1050px;top:121px;color:#f4f4f4" width="15" height="15" viewBox="0 0 16 16"><path d="M14.6 0.6 C15.5 1 15.6 1.9 15 2.7 L8.6 10.2 L6.3 8.3 L13 1 C13.5 0.5 14 0.3 14.6 0.6Z" fill="currentColor"/>
   <path d="M5.6 9 L7.9 11 C8.3 13 6.5 15 3.6 15.2 C2.3 15.3 1 15.6 0.4 15.3 C1.6 14.3 1.6 13 2.1 11.4 C2.7 9.6 4.3 8.6 5.6 9Z" fill="currentColor"/></svg>
<div class="r" style="left:1073px;top:122px;transform:scaleX(0.948);transform-origin:0 50%;/*t*/">02 shaggy 30x (66%)</div>
<div class="prow" style="top:141px"></div>
<svg style="left:1050px;top:145px;color:#f4f4f4" width="15" height="15" viewBox="0 0 16 16"><path d="M14.6 0.6 C15.5 1 15.6 1.9 15 2.7 L8.6 10.2 L6.3 8.3 L13 1 C13.5 0.5 14 0.3 14.6 0.6Z" fill="currentColor"/>
   <path d="M5.6 9 L7.9 11 C8.3 13 6.5 15 3.6 15.2 C2.3 15.3 1 15.6 0.4 15.3 C1.6 14.3 1.6 13 2.1 11.4 C2.7 9.6 4.3 8.6 5.6 9Z" fill="currentColor"/></svg>
<div class="r" style="left:1073px;top:146px;transform:scaleX(0.953);transform-origin:0 50%;/*t*/">03 crayon 45x (77%)</div>
<div class="prow" style="top:165px"></div>
<svg style="left:1050px;top:169px;color:#f4f4f4" width="15" height="15" viewBox="0 0 16 16"><path d="M14.6 0.6 C15.5 1 15.6 1.9 15 2.7 L8.6 10.2 L6.3 8.3 L13 1 C13.5 0.5 14 0.3 14.6 0.6Z" fill="currentColor"/>
   <path d="M5.6 9 L7.9 11 C8.3 13 6.5 15 3.6 15.2 C2.3 15.3 1 15.6 0.4 15.3 C1.6 14.3 1.6 13 2.1 11.4 C2.7 9.6 4.3 8.6 5.6 9Z" fill="currentColor"/></svg>
<div class="r" style="left:1073px;top:170px;transform:scaleX(0.951);transform-origin:0 50%;/*t*/">04 bleedy 50x (77%)</div>
<div class="prow" style="top:189px"></div>
<svg style="left:1050px;top:193px;color:#f4f4f4" width="15" height="15" viewBox="0 0 16 16"><path d="M14.6 0.6 C15.5 1 15.6 1.9 15 2.7 L8.6 10.2 L6.3 8.3 L13 1 C13.5 0.5 14 0.3 14.6 0.6Z" fill="currentColor"/>
   <path d="M5.6 9 L7.9 11 C8.3 13 6.5 15 3.6 15.2 C2.3 15.3 1 15.6 0.4 15.3 C1.6 14.3 1.6 13 2.1 11.4 C2.7 9.6 4.3 8.6 5.6 9Z" fill="currentColor"/></svg>
<div class="r" style="left:1073px;top:194px;transform:scaleX(0.962);transform-origin:0 50%;/*t*/">05 hard 15x (100%)</div>
<div class="prow" style="top:213px"></div>
<svg style="left:1050px;top:217px;color:#f4f4f4" width="15" height="15" viewBox="0 0 16 16"><path d="M14.6 0.6 C15.5 1 15.6 1.9 15 2.7 L8.6 10.2 L6.3 8.3 L13 1 C13.5 0.5 14 0.3 14.6 0.6Z" fill="currentColor"/>
   <path d="M5.6 9 L7.9 11 C8.3 13 6.5 15 3.6 15.2 C2.3 15.3 1 15.6 0.4 15.3 C1.6 14.3 1.6 13 2.1 11.4 C2.7 9.6 4.3 8.6 5.6 9Z" fill="currentColor"/></svg>
<div class="r" style="left:1073px;top:218px;transform:scaleX(0.963);transform-origin:0 50%;/*t*/">06 soft 80x (100%)</div>
<div class="abs" style="left:1050px;top:282px;width:11px;height:11px;border-radius:2px;background:#f4f4f4"></div>
<svg style="left:1051px;top:283px" width="9" height="9" viewBox="0 0 9 9"><path d="M1.6 4.6 L3.8 6.8 L7.6 2" fill="none" stroke="#707070" stroke-width="1.5"/></svg>
<div class="r" style="left:1065.3px;top:280px;transform:scaleX(0.940);transform-origin:0 50%;/*t*/">Current Tool Only</div>
<svg style="left:1211px;top:281px;color:#f2f2f2" width="11" height="11" viewBox="0 0 12 12"><rect x="0.7" y="0.7" width="10.6" height="10.6" fill="none" stroke="currentColor" stroke-width="1.3"/>
   <path d="M6 3.3 V8.7 M3.3 6 H8.7" stroke="currentColor" stroke-width="1.2" fill="none"/></svg>
<svg style="left:1239px;top:281px;color:#d4d4d4" width="11" height="13" viewBox="0 0 12 14"><path d="M0.5 2.8 H11.5 M4 2.6 V1 H8 V2.6" fill="none" stroke="currentColor" stroke-width="1.2"/>
   <path d="M1.7 4.2 H10.3 L9.7 13.4 H2.3Z" fill="none" stroke="currentColor" stroke-width="1.2"/>
   <path d="M4.3 5.6 V11.8 M6 5.6 V11.8 M7.7 5.6 V11.8" fill="none" stroke="currentColor" stroke-width="0.9"/></svg>
<div class="abs" style="left:1043px;top:297px;width:237px;height:3px;background:#6f6f6f"></div>

<!-- layers panel -->
<div class="abs" style="left:1043px;top:300px;width:237px;height:20px;background:#7b7b7b"></div>
<div class="abs" style="left:1043px;top:301px;width:45px;height:19px;background:#828282"></div>
<div class="tab" style="left:1051.4px;top:303px;transform:scaleX(0.815);transform-origin:0 50%;/*t*/">Layers</div>
<div class="tab" style="left:1094.4px;top:303px;color:#dedede;transform:scaleX(0.928);transform-origin:0 50%;/*t*/">History</div>
<svg style="left:1264px;top:306px;color:#e6e6e6" width="10" height="8" viewBox="0 0 10 8"><path d="M0 0 H10 V1 H0Z M0 2 H10 V3 H0Z M0 4 H10 V5 H0Z M0 6 H10 V7 H0Z" fill="currentColor" shape-rendering="crispEdges"/></svg>
<div class="rbox" style="left:1048px;top:327px;width:87px;height:22px"></div>
<svg style="left:1055px;top:332px" width="12" height="12" viewBox="0 0 12 12"><circle cx="4.6" cy="4.6" r="3.6" fill="none" stroke="#f2f2f2" stroke-width="1.4"/><path d="M7.4 7.4 L11 11" stroke="#f2f2f2" stroke-width="1.8"/></svg>
<div class="r" style="left:1070.4px;top:331px;transform:scaleX(0.862);transform-origin:0 50%;/*t*/">Kind</div>
<svg style="left:1123px;top:336px;color:#e6e6e6" width="8" height="5" viewBox="0 0 8 5"><path d="M0.6 0.7 L4 4 L7.4 0.7" fill="none" stroke="currentColor" stroke-width="1.2"/></svg>
<svg style="left:1146px;top:331px" width="14" height="12" viewBox="0 0 14 12"><rect x="0.7" y="0.7" width="12.6" height="10.2" fill="none" stroke="#f2f2f2" stroke-width="1.3"/><path d="M2.4 9 L5.4 5 L7.4 7.4 L9.4 5.6 L11.6 9Z" fill="#f2f2f2"/></svg>
<svg style="left:1170px;top:331px" width="13" height="13" viewBox="0 0 13 13"><circle cx="6.5" cy="6.5" r="5.4" fill="none" stroke="#f2f2f2" stroke-width="1.3"/><path d="M2.7 10.3 A5.4 5.4 0 0 0 10.3 2.7Z" fill="#f2f2f2"/></svg>
<svg style="left:1195px;top:332px" width="12" height="11" viewBox="0 0 12 11"><path d="M0.6 0.4 H11.4 V3.4 H10 V2 H7.2 V9.2 H8.8 V10.6 H3.2 V9.2 H4.8 V2 H2 V3.4 H0.6Z" fill="#f2f2f2"/></svg>
<svg style="left:1218px;top:331px" width="13" height="13" viewBox="0 0 13 13"><rect x="1.8" y="1.8" width="9.4" height="9.4" fill="none" stroke="#f2f2f2" stroke-width="1.2"/><path d="M0.3 0.3 h3 v3 h-3z M9.7 0.3 h3 v3 h-3z M0.3 9.7 h3 v3 h-3z M9.7 9.7 h3 v3 h-3z" fill="#f2f2f2"/></svg>
<svg style="left:1243px;top:331px" width="12" height="13" viewBox="0 0 12 13"><path d="M4.4 0.7 H8.6 L11.3 3.4 V10 H4.4Z" fill="none" stroke="#f2f2f2" stroke-width="1.2"/><rect x="0.4" y="6.4" width="6.4" height="6.2" fill="#f2f2f2"/></svg>
<div class="abs" style="left:1266px;top:328px;width:10px;height:19px;border-radius:5px;border:1px solid #909090;background:#7e7e7e"></div>
<div class="abs" style="left:1266px;top:327px;width:10px;height:10px;border-radius:50%;background:#f4f4f4"></div>
<div class="rbox" style="left:1048px;top:355px;width:129px;height:22px"></div>
<div class="r" style="left:1056.4px;top:359px;transform:scaleX(0.908);transform-origin:0 50%;/*t*/">Normal</div>
<svg style="left:1165px;top:364px;color:#e6e6e6" width="8" height="5" viewBox="0 0 8 5"><path d="M0.6 0.7 L4 4 L7.4 0.7" fill="none" stroke="currentColor" stroke-width="1.2"/></svg>
<div class="r" style="left:1182.4px;top:358px;color:#e4e4e4;transform:scaleX(0.907);transform-origin:0 50%;/*t*/">Opacity:</div>
<div class="rbox" style="left:1224px;top:357px;width:51px;height:17px"></div>
<div class="abs" style="left:1259px;top:358px;width:1px;height:15px;background:#909090"></div>
<div class="r" style="left:1229.4px;top:359px;font-size:10.5px;transform:scaleX(0.879);transform-origin:0 50%;/*t*/">100%</div>
<svg style="left:1263px;top:364px;color:#e6e6e6" width="8" height="5" viewBox="0 0 8 5"><path d="M0.6 0.7 L4 4 L7.4 0.7" fill="none" stroke="currentColor" stroke-width="1.2"/></svg>
<div class="r" style="left:1050.4px;top:386px;color:#dcdcdc;transform:scaleX(0.946);transform-origin:0 50%;/*t*/">Unify:</div>
<svg style="left:1080px;top:385px" width="64" height="17" viewBox="0 0 64 17" fill="none" stroke="#f2f2f2">
 <path d="M8.4 1 L12.4 5 L10.6 5.6 L8.6 8.4 L8 10.4 L2.8 5.2 L5 4.6 L7.8 2.6Z" fill="#f2f2f2" stroke="none"/><path d="M5 8.4 L1 12.4" stroke-width="1.2"/>
 <g stroke-width="1.1"><rect x="8.8" y="11.6" width="4.4" height="3.6" rx="1.8"/><rect x="12" y="11.6" width="4.4" height="3.6" rx="1.8"/></g>
 <path d="M23 6 C25 3.4 27 2.4 29.4 2.4 C31.8 2.4 33.8 3.4 35.8 6 C33.8 8.6 31.8 9.6 29.4 9.6 C27 9.6 25 8.6 23 6Z" fill="#f2f2f2" stroke="none"/><circle cx="29.4" cy="6" r="2.2" fill="#848484" stroke="none"/><circle cx="29.4" cy="6" r="1.1" fill="#f2f2f2" stroke="none"/>
 <g stroke-width="1.1"><rect x="30.8" y="11.6" width="4.4" height="3.6" rx="1.8"/><rect x="34" y="11.6" width="4.4" height="3.6" rx="1.8"/></g>
 <g stroke-width="1.1"><rect x="52.8" y="11.6" width="4.4" height="3.6" rx="1.8"/><rect x="56" y="11.6" width="4.4" height="3.6" rx="1.8"/></g>
</svg>
<div class="r" style="left:1126px;top:383px;font-family:'Liberation Serif',serif;font-style:italic;font-size:15px;line-height:16px;color:#f4f4f4;letter-spacing:-0.5px">fx</div>
<div class="abs" style="left:1169px;top:388px;width:11px;height:11px;border-radius:2px;background:#f4f4f4"></div>
<svg style="left:1170px;top:389px" width="9" height="9" viewBox="0 0 9 9"><path d="M1.6 4.6 L3.8 6.8 L7.6 2" fill="none" stroke="#707070" stroke-width="1.5"/></svg>
<div class="r" style="left:1184.4px;top:386px;font-size:10.5px;transform:scaleX(0.946);transform-origin:0 50%;/*t*/">Propagate Frame 1</div>
<div class="abs" style="left:1046px;top:407px;width:230px;height:1px;background:#7c7c7c"></div>
<div class="r" style="left:1050.4px;top:414px;color:#dcdcdc;transform:scaleX(0.882);transform-origin:0 50%;/*t*/">Lock:</div>
<svg style="left:1082px;top:414px" width="104" height="15" viewBox="0 0 104 15" fill="none" stroke="#f2f2f2">
 <rect x="1.1" y="1.6" width="10.8" height="10.8" stroke-width="1.2"/><path d="M2.8 3.2 h2.6 v2.6 h-2.6z M7.6 3.2 h2.6 v2.6 h-2.6z M5.2 5.6 h2.6 v2.6 h-2.6z M2.8 8 h2.6 v2.6 h-2.6z M7.6 8 h2.6 v2.6 h-2.6z" fill="#f2f2f2" stroke="none"/>
 <g transform="translate(22.4 1) scale(0.82)" fill="#f2f2f2" stroke="none"><path d="M14.6 0.6 C15.5 1 15.6 1.9 15 2.7 L8.6 10.2 L6.3 8.3 L13 1 C13.5 0.5 14 0.3 14.6 0.6Z"/><path d="M5.6 9 L7.9 11 C8.3 13 6.5 15 3.6 15.2 C2.3 15.3 1 15.6 0.4 15.3 C1.6 14.3 1.6 13 2.1 11.4 C2.7 9.6 4.3 8.6 5.6 9Z"/></g>
 <path d="M51 1.6 V13 M45.2 7.3 H56.8" stroke-width="1.2"/><path d="M51 0.4 L53.2 3 H48.8Z M51 14.2 L53.2 11.6 H48.8Z M44 7.3 L46.6 5.1 V9.5Z M58 7.3 L55.4 5.1 V9.5Z" fill="#f2f2f2" stroke="none"/>
 <path d="M69.6 1 V11.4 H80.6 M67 3.8 H77.6 V14.4" stroke-width="1.2"/><path d="M75.2 1.4 L80 1.4 L80 6" stroke-width="1" stroke-dasharray="1.4 1"/>
 <rect x="90" y="6.4" width="10" height="7.6" fill="#f2f2f2" stroke="none"/><path d="M92 6.4 V4.4 C92 1.4 98 1.4 98 4.4 V6.4" stroke-width="1.4"/><rect x="94.2" y="9" width="1.6" height="2.4" fill="#848484" stroke="none"/>
</svg>
<div class="r" style="left:1204.4px;top:414px;color:#c4c4c4;transform:scaleX(0.853);transform-origin:0 50%;/*t*/">Fill:</div>
<div class="rbox" style="left:1224px;top:413px;width:51px;height:17px"></div>
<div class="abs" style="left:1259px;top:414px;width:1px;height:15px;background:#909090"></div>
<div class="r" style="left:1229.4px;top:415px;font-size:10.5px;transform:scaleX(0.879);transform-origin:0 50%;/*t*/">100%</div>
<svg style="left:1263px;top:420px;color:#e6e6e6" width="8" height="5" viewBox="0 0 8 5"><path d="M0.6 0.7 L4 4 L7.4 0.7" fill="none" stroke="currentColor" stroke-width="1.2"/></svg>
<!-- layer list -->
<div class="abs" style="left:1046px;top:434px;width:217px;height:168px;background:#808080"></div>
<div class="abs" style="left:1263px;top:434px;width:13px;height:168px;background:#7b7b7b"></div>
<div class="abs" style="left:1074px;top:460px;width:189px;height:27px;background:#959595"></div>
<svg style="left:1053px;top:442.5px;color:#f4f4f4" width="14" height="9" viewBox="0 0 14 9"><path d="M0.3 4.5 C2.3 1.4 4.6 0.3 7 0.3 C9.4 0.3 11.7 1.4 13.7 4.5 C11.7 7.6 9.4 8.7 7 8.7 C4.6 8.7 2.3 7.6 0.3 4.5Z" fill="currentColor"/>
   <circle cx="7" cy="4.4" r="2.7" fill="#848484"/>
   <circle cx="7" cy="4.4" r="1.5" fill="currentColor"/></svg>
<svg style="left:1053px;top:470.5px;color:#f4f4f4" width="14" height="9" viewBox="0 0 14 9"><path d="M0.3 4.5 C2.3 1.4 4.6 0.3 7 0.3 C9.4 0.3 11.7 1.4 13.7 4.5 C11.7 7.6 9.4 8.7 7 8.7 C4.6 8.7 2.3 7.6 0.3 4.5Z" fill="currentColor"/>
   <circle cx="7" cy="4.4" r="2.7" fill="#848484"/>
   <circle cx="7" cy="4.4" r="1.5" fill="currentColor"/></svg>
<svg style="left:1053px;top:497.5px;color:#f4f4f4" width="14" height="9" viewBox="0 0 14 9"><path d="M0.3 4.5 C2.3 1.4 4.6 0.3 7 0.3 C9.4 0.3 11.7 1.4 13.7 4.5 C11.7 7.6 9.4 8.7 7 8.7 C4.6 8.7 2.3 7.6 0.3 4.5Z" fill="currentColor"/>
   <circle cx="7" cy="4.4" r="2.7" fill="#848484"/>
   <circle cx="7" cy="4.4" r="1.5" fill="currentColor"/></svg>
<svg style="left:1053px;top:525.5px;color:#f4f4f4" width="14" height="9" viewBox="0 0 14 9"><path d="M0.3 4.5 C2.3 1.4 4.6 0.3 7 0.3 C9.4 0.3 11.7 1.4 13.7 4.5 C11.7 7.6 9.4 8.7 7 8.7 C4.6 8.7 2.3 7.6 0.3 4.5Z" fill="currentColor"/>
   <circle cx="7" cy="4.4" r="2.7" fill="#848484"/>
   <circle cx="7" cy="4.4" r="1.5" fill="currentColor"/></svg>
<svg style="left:1053px;top:553.5px;color:#f4f4f4" width="14" height="9" viewBox="0 0 14 9"><path d="M0.3 4.5 C2.3 1.4 4.6 0.3 7 0.3 C9.4 0.3 11.7 1.4 13.7 4.5 C11.7 7.6 9.4 8.7 7 8.7 C4.6 8.7 2.3 7.6 0.3 4.5Z" fill="currentColor"/>
   <circle cx="7" cy="4.4" r="2.7" fill="#848484"/>
   <circle cx="7" cy="4.4" r="1.5" fill="currentColor"/></svg>
<svg style="left:1053px;top:581.5px;color:#f4f4f4" width="14" height="9" viewBox="0 0 14 9"><path d="M0.3 4.5 C2.3 1.4 4.6 0.3 7 0.3 C9.4 0.3 11.7 1.4 13.7 4.5 C11.7 7.6 9.4 8.7 7 8.7 C4.6 8.7 2.3 7.6 0.3 4.5Z" fill="currentColor"/>
   <circle cx="7" cy="4.4" r="2.7" fill="#848484"/>
   <circle cx="7" cy="4.4" r="1.5" fill="currentColor"/></svg>
<svg style="left:1078px;top:445px;color:#ececec" width="8" height="5" viewBox="0 0 8 5"><path d="M0.6 0.7 L4 4 L7.4 0.7" fill="none" stroke="currentColor" stroke-width="1.2"/></svg>
<svg style="left:1090px;top:441px" width="15" height="12" viewBox="0 0 15 12"><path d="M0.4 0.6 H5.6 L6.8 2.4 H14.6 V11.4 H0.4Z" fill="#f6f6f6"/><path d="M1.2 4 H13.8" stroke="#8a8a8a" stroke-width="0.8"/></svg>
<div class="r" style="left:1116.6px;top:440px;font-size:10.5px;transform:scaleX(0.900);transform-origin:0 50%;/*t*/">LINE</div>
<div class="thumb" style="left:1095px;top:465px;width:31px;height:18px;border-top:0"></div>
<svg style="left:1092px;top:462px" width="37" height="24" viewBox="0 0 37 24" fill="none" stroke="#f6f6f6" stroke-width="1.1"><path d="M0.6 6 V0.6 H10 M27 0.6 H36.4 V6 M36.4 18 V23.4 H27 M10 23.4 H0.6 V18"/></svg>
<div class="r" style="left:1135.3px;top:468px;font-size:10.5px;transform:scaleX(0.907);transform-origin:0 50%;/*t*/">17</div>
<div class="thumb" style="left:1094px;top:493px;width:32px;height:19px"></div>
<div class="r" style="left:1135.3px;top:495px;font-size:10.5px;transform:scaleX(0.924);transform-origin:0 50%;/*t*/">9</div>
<div class="thumb" style="left:1094px;top:521px;width:32px;height:19px"></div>
<div class="r" style="left:1135.6px;top:523px;font-size:10.5px;transform:scaleX(0.684);transform-origin:0 50%;/*t*/">1</div>
<div class="thumb" style="left:1078px;top:549px;width:32px;height:19px"></div>
<svg style="left:1078px;top:549px" width="32" height="19" viewBox="0 0 32 19"><path d="M6 8 l2 -2 m2 4 l1 2 m5 -5 l2 1 m-6 6 l2 1 m5 -3 l2 -2 m2 -3 l1 2 m-11 3 l1 1 m4 1 l2 -1" stroke="#a0a0a0" stroke-width="0.8" fill="none"/></svg>
<div class="r" style="left:1119.3px;top:551px;font-size:10.5px;transform:scaleX(0.995);transform-origin:0 50%;/*t*/">thumbnail</div>
<div class="thumb" style="left:1078px;top:577px;width:32px;height:19px"></div>
<div class="r" style="left:1120px;top:579px;font-size:10.5px;font-style:italic;transform:scaleX(0.956);transform-origin:0 50%;/*t*/">Background</div>
<svg style="left:1237px;top:579px" width="11" height="13" viewBox="0 0 11 13"><rect x="0.8" y="5.4" width="9.4" height="6.8" fill="none" stroke="#f2f2f2" stroke-width="1.3"/><path d="M2.8 5.4 V3.6 C2.8 1 8.2 1 8.2 3.6 V5.4" fill="none" stroke="#f2f2f2" stroke-width="1.3"/><rect x="4.6" y="7.8" width="1.8" height="2.2" fill="#f2f2f2"/></svg>
<!-- hand cursor -->
<svg style="left:1157px;top:465px" width="18" height="20" viewBox="0 0 18 20"><path d="M5.6 10.6 V2.6 C5.6 0.8 8 0.8 8 2.6 V7.2 C8 6 10.2 6.2 10.2 7.4 V8 C10.4 6.8 12.4 7 12.4 8.2 V8.8 C12.6 7.8 14.6 8 14.6 9.2 V13.6 C14.6 16.6 13.4 18.8 10.4 18.8 H8.4 C6.4 18.8 5.2 17.6 4.2 15.8 L1.6 11.6 C1 10.4 2.4 9.4 3.4 10.6 L5.6 13Z" fill="#fdfdfd" stroke="#3c3c3c" stroke-width="1"/></svg>
<!-- layers footer icons -->
<svg style="left:1076px;top:780px" width="178" height="16" viewBox="0 0 178 16" fill="none" stroke="#f0f0f0">
 <g stroke="#b4b4b4" stroke-width="1.2"><rect x="1.6" y="4.6" width="7.4" height="5.2" rx="2.6"/><rect x="7" y="4.6" width="7.4" height="5.2" rx="2.6"/></g>
 <path d="M66 15.4 H70 L68 17.4Z M120 15.4 H124 L122 17.4Z" fill="#f0f0f0" stroke="none" transform="translate(0 -3)"/>
 <rect x="56" y="1.6" width="12.6" height="10.2" fill="#f2f2f2" stroke="none"/><circle cx="62.3" cy="6.7" r="3" fill="#7c7c7c" stroke="none"/>
 <circle cx="90" cy="7" r="5.4" stroke-width="1.3"/><path d="M86.2 10.8 A5.4 5.4 0 0 0 93.8 3.2Z" fill="#f2f2f2" stroke="none"/>
 <path d="M110 1.6 H115 L116 3.2 H122.6 V12 H110Z" fill="#f2f2f2" stroke="none"/>
 <rect x="138.7" y="1.7" width="10.6" height="10.6" stroke-width="1.3"/><path d="M144 4.2 V9.8 M141.2 7 H146.8" stroke-width="1.1"/>
</svg>
<div class="r" style="left:1104px;top:778px;font-family:'Liberation Serif',serif;font-style:italic;font-size:15px;line-height:16px;color:#f4f4f4;letter-spacing:-0.5px">fx</div>
<svg style="left:1240px;top:780px;color:#d8d8d8" width="12" height="14" viewBox="0 0 12 14"><path d="M0.5 2.8 H11.5 M4 2.6 V1 H8 V2.6" fill="none" stroke="currentColor" stroke-width="1.2"/>
   <path d="M1.7 4.2 H10.3 L9.7 13.4 H2.3Z" fill="none" stroke="currentColor" stroke-width="1.2"/>
   <path d="M4.3 5.6 V11.8 M6 5.6 V11.8 M7.7 5.6 V11.8" fill="none" stroke="currentColor" stroke-width="0.9"/></svg>

<!-- paper watermark -->
<div class="abs" style="left:228px;top:194px;width:640px;height:360px;overflow:hidden">
<svg style="left:0;top:0;pointer-events:none;filter:blur(0.7px)" width="640" height="360" viewBox="228 194 640 360">
 <g fill="#fefefe" stroke="#f1f1f1" stroke-width="4.4" stroke-linejoin="round" paint-order="stroke" text-anchor="middle">
  <g font-family="'Liberation Serif',serif" font-weight="bold" font-size="56" letter-spacing="8">
   <text x="289" y="140" transform="translate(289 140) rotate(-24) scale(0.88 1) translate(-289 -140)" dy="19">RRCG</text>
   <text x="770" y="310" transform="translate(770 310) rotate(-24) scale(0.88 1) translate(-770 -310)" dy="19">RRCG</text>
   <text x="470" y="445" transform="translate(470 445) rotate(-24) scale(0.88 1) translate(-470 -445)" dy="19">RRCG</text>
   <text x="190" y="572" transform="translate(190 572) rotate(-24) scale(0.88 1) translate(-190 -572)" dy="19">RRCG</text>
  </g>
  <g font-family="'Liberation Serif','Noto Serif CJK SC',serif" font-weight="bold" font-size="52" letter-spacing="7">
   <text x="472" y="250" transform="rotate(-27 472 250)" dy="19">人人素材</text>
   <text x="690" y="553" transform="rotate(-27 690 553)" dy="19">人人素材</text>
  </g>
 </g>
</svg>
</div>
<!-- sketch on canvas -->
<svg style="left:0;top:0;filter:blur(0.35px)" width="1280" height="800" viewBox="0 0 1280 800" fill="none" stroke-linecap="round" stroke-linejoin="round">
 <!-- head 1 -->
 <g stroke="#6e6e6e" stroke-width="1.8">
  <ellipse cx="370" cy="323" rx="51" ry="53" stroke="#5c5c5c" stroke-width="2.1"/>
  <ellipse cx="368" cy="321" rx="52" ry="49" transform="rotate(-20 368 321)" stroke="#8a8a8a" stroke-width="1.4"/>
  <ellipse cx="371" cy="324" rx="49" ry="51" transform="rotate(14 371 324)" stroke="#969696" stroke-width="1.2"/>
  <path d="M322 332 C317 300 338 273 372 271" stroke="#4e4e4e" stroke-width="2.5"/>
  <path d="M420 340 C426 320 420 296 404 282" stroke="#5a5a5a" stroke-width="2.2"/>
  <path d="M420 305 C437 300 440 330 422 346" stroke="#838383" stroke-width="1.6"/>
  <path d="M329 318 C350 312 385 310 403 318" stroke="#7e7e7e" stroke-width="1.4"/>
  <path d="M348 315 C352 335 358 355 366 366" stroke="#868686" stroke-width="1.4"/>
  <path d="M324 322 L347 318 M326 328 L344 326 M328 352 C338 358 350 360 357 357 M334 344 C340 350 348 352 354 352" stroke="#747474" stroke-width="1.6"/>
  <path d="M324 318 C322 328 326 340 330 348" stroke="#686868" stroke-width="1.9"/>
  <path d="M357 367 C368 366 376 360 381 353 C381 363 374 371 363 371Z" fill="#585858" stroke="#585858" stroke-width="1.6"/>
  <path d="M359 299 L361 306 M356 346 L360 348" stroke="#686868" stroke-width="2.0"/>
  <path d="M372 385 C380 383 388 379 395 374" stroke="#787878" stroke-width="1.6"/>
  <path d="M350 376 C357 385 362 392 362 400 C362 424 358 450 359 473" stroke="#727272" stroke-width="1.9"/>
  <path d="M364 412 C360 430 352 452 345 468" stroke="#868686" stroke-width="1.6"/>
  <path d="M370 408 C368 430 364 455 360 476" stroke="#7e7e7e" stroke-width="1.6"/>
  <path d="M366 420 C364 436 360 452 356 466" stroke="#929292" stroke-width="1.4"/>
  <path d="M393 376 C404 400 424 436 438 463" stroke="#5e5e5e" stroke-width="2.4"/>
  <path d="M400 380 C414 408 436 442 455 463" stroke="#707070" stroke-width="1.9"/>
  <path d="M398 386 C408 410 420 436 430 456" stroke="#888888" stroke-width="1.4"/>
 </g>
 <!-- head 2 -->
 <g stroke="#6e6e6e" stroke-width="1.8">
  <path d="M497 385 C494 350 515 330 542 329 C566 328 580 350 580 380 C580 410 566 428 540 428 C514 428 500 412 497 385Z" stroke="#585858" stroke-width="2.2"/>
  <path d="M500 390 C496 356 516 334 544 332 C562 332 576 346 580 366" stroke="#787878" stroke-width="1.6"/>
  <ellipse cx="536" cy="380" rx="36" ry="42" stroke="#969696" stroke-width="1.2"/>
  <path d="M531 346 C530 370 530 395 534 414" stroke="#767676" stroke-width="1.6"/>
  <path d="M503 372 L519 382 M506 388 L514 391 M540 390 C548 380 556 378 564 378" stroke="#7e7e7e" stroke-width="1.6"/>
  <path d="M510 400 C526 410 548 408 562 400 M506 412 C524 424 552 424 568 408 M514 424 C530 436 552 434 566 420" stroke="#808080" stroke-width="1.6"/>
  <path d="M538 394 L544 392 M540 398 L542 420" stroke="#6e6e6e" stroke-width="1.8"/>
  <path d="M540 437 C552 433 564 427 573 418" stroke="#8e8e8e" stroke-width="3.2"/>
  <path d="M488 363 C484 392 490 430 486 462" stroke="#6e6e6e" stroke-width="2.4"/>
  <path d="M490 364 L495 362 M492 400 C494 420 494 440 495 452" stroke="#878787" stroke-width="1.6"/>
  <path d="M496 410 C500 430 504 446 506 457 M504 412 C508 430 510 444 510 455 M512 420 C520 436 526 450 530 461" stroke="#717171" stroke-width="1.9"/>
  <path d="M569 361 C588 356 604 400 606 456" stroke="#545454" stroke-width="2.6"/>
  <path d="M569 362 C564 376 568 396 574 406 M576 368 C584 392 590 430 584 453" stroke="#626262" stroke-width="2.1"/>
  <path d="M572 366 C580 372 582 390 578 404" stroke="#878787" stroke-width="1.6"/>
 </g>
 <!-- head 3 -->
 <g stroke="#6e6e6e" stroke-width="1.8">
  <path d="M645 318 C632 296 640 266 668 257 C684 252 702 254 712 260 C718 270 722 280 726 286 C736 282 748 276 756 278 C760 290 748 316 740 326" stroke="#646464" stroke-width="2.1"/>
  <path d="M638 308 C640 282 660 262 686 256" stroke="#727272" stroke-width="1.6"/>
  <path d="M640 312 C636 290 648 268 672 258" stroke="#8e8e8e" stroke-width="1.4"/>
  <path d="M698 264 C696 268 696 272 700 274 M714 282 L716 292 M736 308 L728 312" stroke="#767676" stroke-width="1.6"/>
  <path d="M648 326 C644 320 652 316 662 318 C668 320 668 326 662 330 M648 332 C652 338 660 340 668 344 M646 320 C650 330 656 336 664 340" stroke="#808080" stroke-width="1.6"/>
  <path d="M672 340 L686 334" stroke="#9a9a9a" stroke-width="3.0"/>
  <path d="M712 324 C710 336 712 348 716 356 M722 322 C730 330 738 336 742 340 M716 326 L720 318" stroke="#646464" stroke-width="2.0"/>
  <path d="M718 358 C706 366 694 370 688 376 C684 380 684 390 684 400 C684 430 686 452 690 471" stroke="#6c6c6c" stroke-width="1.9"/>
  <path d="M690 392 C690 420 690 450 688 473" stroke="#808080" stroke-width="1.6"/>
  <path d="M668 346 C676 352 678 358 676 368 C670 400 650 448 632 481" stroke="#5e5e5e" stroke-width="2.4"/>
  <path d="M672 380 C664 410 646 448 630 467 M666 410 C656 436 644 456 634 471 M660 430 C652 446 644 458 638 466" stroke="#808080" stroke-width="1.6"/>
 </g>
 <!-- frame ruler -->
 <g stroke="#979797" stroke-width="1.2">
  <ellipse cx="381" cy="505" rx="17" ry="23"/>
  <path d="M366 496 C370 486 378 481 386 483" stroke="#b0b0b0" stroke-width="1"/>
  <ellipse cx="541" cy="502" rx="22" ry="26" transform="rotate(12 541 502)"/>
  <ellipse cx="678" cy="500" rx="24" ry="22"/>
  <path d="M398 505 L450 505 L519 501 M563 500 L610 502 L654 501" stroke="#a0a0a0" stroke-width="1.1"/>
  <path d="M411 494 V514 M428 494 V515 M459 492 V518 M610 489 V515 M635 492 V513 M645 494 V510" stroke="#a8a8a8" stroke-width="1"/>
  <path d="M452 542 L470 541 M602 535 L614 534" stroke="#a0a0a0"/>
 </g>
 <g font-family="'Liberation Sans',sans-serif" fill="#a0a0a0" stroke="none" text-anchor="middle">
  <text x="381" y="515" font-size="28" transform="rotate(-3 381 505)">1</text>
  <text x="541" y="513" font-size="32" transform="rotate(4 541 502)">9</text>
  <text x="678" y="510" font-size="27" transform="rotate(-3 678 500)" letter-spacing="-1">17</text>
  <g font-size="9" fill="#b4b4b4">
   <text x="410" y="530">3</text><text x="426" y="531">5</text><text x="459" y="536">7</text>
   <text x="608" y="531">11</text><text x="635" y="530">13</text><text x="646" y="530">15</text>
  </g>
 </g>
</svg>
<!-- faint tiled watermark -->
<svg style="left:0;top:0;pointer-events:none" width="1280" height="800" viewBox="0 0 1280 800">
 <g fill="#fff" stroke="#fff" stroke-width="2" stroke-linejoin="round" text-anchor="middle">
  <g font-family="'Liberation Serif',serif" font-weight="bold" font-size="56" letter-spacing="8">
   <text x="289" y="140" transform="translate(289 140) rotate(-24) scale(0.88 1) translate(-289 -140)" dy="19" opacity="0.075">RRCG</text>
   <text x="612" y="18" transform="translate(612 18) rotate(-24) scale(0.88 1) translate(-612 -18)" dy="19" opacity="0.075">RRCG</text>
   <text x="770" y="310" transform="translate(770 310) rotate(-24) scale(0.88 1) translate(-770 -310)" dy="19" opacity="0.075">RRCG</text>
   <text x="1042" y="180" transform="translate(1042 180) rotate(-24) scale(0.88 1) translate(-1042 -180)" dy="19" opacity="0.075">RRCG</text>
   <text x="470" y="445" transform="translate(470 445) rotate(-24) scale(0.88 1) translate(-470 -445)" dy="19" opacity="0.075">RRCG</text>
   <text x="190" y="572" transform="translate(190 572) rotate(-24) scale(0.88 1) translate(-190 -572)" dy="19" opacity="0.075">RRCG</text>
   <text x="690" y="760" transform="translate(690 760) rotate(-24) scale(0.88 1) translate(-690 -760)" dy="19" opacity="0.075">RRCG</text>
   <text x="960" y="630" transform="translate(960 630) rotate(-24) scale(0.88 1) translate(-960 -630)" dy="19" opacity="0.075">RRCG</text>
   <text x="1240" y="505" transform="translate(1240 505) rotate(-24) scale(0.88 1) translate(-1240 -505)" dy="19" opacity="0.075">RRCG</text>
  </g>
  <g font-family="'Liberation Serif','Noto Serif CJK SC',serif" font-weight="bold" font-size="52" letter-spacing="7">
   <text x="110" y="395" transform="rotate(-27 110 395)" dy="19" opacity="0.075">人人素材</text>
   <text x="472" y="250" transform="rotate(-27 472 250)" dy="19" opacity="0.075">人人素材</text>
   <text x="832" y="88" transform="rotate(-27 832 88)" dy="19" opacity="0.075">人人素材</text>
   <text x="320" y="730" transform="rotate(-27 320 730)" dy="19" opacity="0.075">人人素材</text>
   <text x="690" y="553" transform="rotate(-27 690 553)" dy="19" opacity="0.075">人人素材</text>
   <text x="1026" y="408" transform="rotate(-27 1026 408)" dy="19" opacity="0.075">人人素材</text>
   <text x="1075" y="800" transform="rotate(-27 1075 800)" dy="19" opacity="0.075">人人素材</text>
   <text x="1352" y="34" transform="rotate(-27 1352 34)" dy="19" opacity="0.075">人人素材</text>
  </g>
 </g>
</svg>
<!-- video watermark: LinkedIn Learning + RRCG logo -->
<div class="abs" style="left:1087px;top:762px;font-size:19px;line-height:20px;font-weight:bold;color:#fbfbfb;letter-spacing:0.6px;white-space:nowrap">Linked</div>
<div class="abs" style="left:1153px;top:759px;width:22px;height:22px;border-radius:2px;background:#fbfbfb"></div>
<div class="abs" style="left:1156px;top:761px;font-size:19px;line-height:20px;font-weight:bold;color:#8a8a8a;letter-spacing:0.4px;white-space:nowrap">in</div>
<div class="abs" style="left:1181px;top:763px;font-size:15.5px;line-height:20px;color:#fbfbfb;letter-spacing:1.3px;white-space:nowrap;transform:scaleX(1.15);transform-origin:0 0;-webkit-text-stroke:0.5px #fbfbfb">Learning</div>
<svg style="left:1070px;top:700px" width="210" height="90" viewBox="1070 700 210 90">
 <!-- top grey arc -->
 <path d="M1076.7 735.6 A38.5 38.5 0 0 1 1152.1 735.6 H1144.9 A31.5 31.5 0 0 0 1083.9 735.6Z" fill="#c6c6c6" stroke="#1c2026" stroke-width="1.3" stroke-linejoin="round"/>
 <!-- bottom blue arc -->
 <path d="M1075.97 741 H1090.2 V748.6 H1083.84 A31 31 0 0 0 1144.96 748.6 H1138.6 V741 H1152.83 A38.5 38.5 0 1 1 1075.97 741Z" fill="#1d9ae6" stroke="#10263a" stroke-width="1.3" stroke-linejoin="round"/>
 <!-- shield RR -->
 <path d="M1114.4 718.4 L1135.8 726.6 V740.2 L1134.2 741.8 L1135.8 743.4 V754.4 L1128 759.8 L1127.2 749 L1119.4 745.4 V765.4 L1114.4 768.8 L1109.4 765.4 V745.4 L1101.6 749 L1100.8 759.8 L1093 754.4 V743.4 L1094.6 741.8 L1093 740.2 V726.6Z" fill="#1d9ae6" stroke="#10263a" stroke-width="1.3" stroke-linejoin="round"/>
 <path d="M1102.6 730.6 H1108.6 V737 H1102.6Z M1120.2 730.6 H1126.2 V737 H1120.2Z" fill="#7c8084" stroke="#10263a" stroke-width="1.1" stroke-linejoin="round"/>
 <path d="M1109.4 728 V746 M1119.4 728 V746" fill="none" stroke="#10263a" stroke-width="1"/>
 <!-- RRCG -->
 <text x="1163" y="745" font-family="'Liberation Sans',sans-serif" font-weight="bold" font-size="35.5" textLength="111" lengthAdjust="spacingAndGlyphs" fill="#9c9c9c" stroke="#333" stroke-width="2" stroke-linejoin="round" paint-order="stroke">RRCG</text>
 <text x="1168" y="765.5" font-family="'Liberation Sans','Noto Sans CJK SC',sans-serif" font-weight="bold" font-size="19.5" textLength="106" lengthAdjust="spacingAndGlyphs" fill="#646464" stroke="#262626" stroke-width="1.5" stroke-linejoin="round" paint-order="stroke" transform="translate(1168 765.5) skewX(-10) translate(-1168 -765.5)">人人素材</text>
</svg>
</div>
</body>
</html>
